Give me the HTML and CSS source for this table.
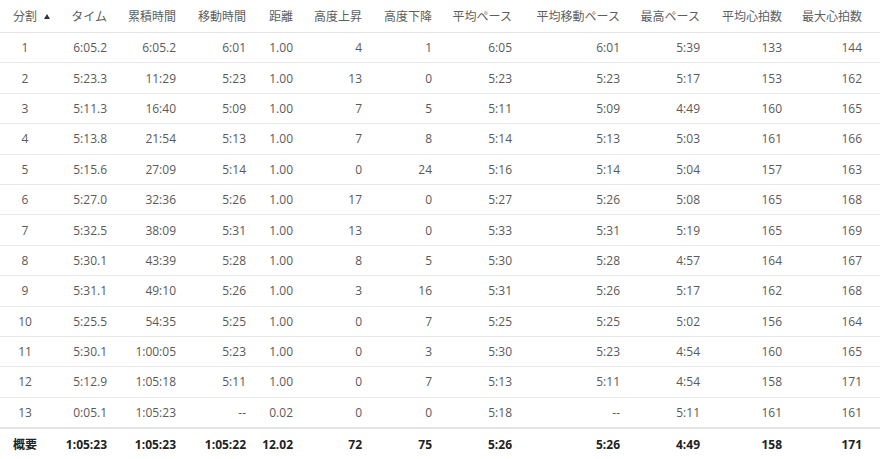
FILE: index.html
```html
<!DOCTYPE html>
<html lang="ja">
<head>
<meta charset="utf-8">
<link rel="stylesheet" href="styles.css">
</head>
<body>
<table class="laps">
<colgroup>
<col class="c1"><col class="c2"><col class="c3"><col class="c4"><col class="c5"><col class="c6"><col class="c7"><col class="c8"><col class="c9"><col class="c10"><col class="c11"><col class="c12">
</colgroup>
<thead>
<tr>
<th class="split"><span class="sort">分割</span></th><th>タイム</th><th>累積時間</th><th>移動時間</th><th>距離</th><th>高度上昇</th><th>高度下降</th><th>平均ペース</th><th>平均移動ペース</th><th>最高ペース</th><th>平均心拍数</th><th>最大心拍数</th>
</tr>
</thead>
<tbody>
<tr><td>1</td><td>6:05.2</td><td>6:05.2</td><td>6:01</td><td>1.00</td><td>4</td><td>1</td><td>6:05</td><td>6:01</td><td>5:39</td><td>133</td><td>144</td></tr>
<tr><td>2</td><td>5:23.3</td><td>11:29</td><td>5:23</td><td>1.00</td><td>13</td><td>0</td><td>5:23</td><td>5:23</td><td>5:17</td><td>153</td><td>162</td></tr>
<tr><td>3</td><td>5:11.3</td><td>16:40</td><td>5:09</td><td>1.00</td><td>7</td><td>5</td><td>5:11</td><td>5:09</td><td>4:49</td><td>160</td><td>165</td></tr>
<tr><td>4</td><td>5:13.8</td><td>21:54</td><td>5:13</td><td>1.00</td><td>7</td><td>8</td><td>5:14</td><td>5:13</td><td>5:03</td><td>161</td><td>166</td></tr>
<tr><td>5</td><td>5:15.6</td><td>27:09</td><td>5:14</td><td>1.00</td><td>0</td><td>24</td><td>5:16</td><td>5:14</td><td>5:04</td><td>157</td><td>163</td></tr>
<tr><td>6</td><td>5:27.0</td><td>32:36</td><td>5:26</td><td>1.00</td><td>17</td><td>0</td><td>5:27</td><td>5:26</td><td>5:08</td><td>165</td><td>168</td></tr>
<tr><td>7</td><td>5:32.5</td><td>38:09</td><td>5:31</td><td>1.00</td><td>13</td><td>0</td><td>5:33</td><td>5:31</td><td>5:19</td><td>165</td><td>169</td></tr>
<tr><td>8</td><td>5:30.1</td><td>43:39</td><td>5:28</td><td>1.00</td><td>8</td><td>5</td><td>5:30</td><td>5:28</td><td>4:57</td><td>164</td><td>167</td></tr>
<tr><td>9</td><td>5:31.1</td><td>49:10</td><td>5:26</td><td>1.00</td><td>3</td><td>16</td><td>5:31</td><td>5:26</td><td>5:17</td><td>162</td><td>168</td></tr>
<tr><td>10</td><td>5:25.5</td><td>54:35</td><td>5:25</td><td>1.00</td><td>0</td><td>7</td><td>5:25</td><td>5:25</td><td>5:02</td><td>156</td><td>164</td></tr>
<tr><td>11</td><td>5:30.1</td><td>1:00:05</td><td>5:23</td><td>1.00</td><td>0</td><td>3</td><td>5:30</td><td>5:23</td><td>4:54</td><td>160</td><td>165</td></tr>
<tr><td>12</td><td>5:12.9</td><td>1:05:18</td><td>5:11</td><td>1.00</td><td>0</td><td>7</td><td>5:13</td><td>5:11</td><td>4:54</td><td>158</td><td>171</td></tr>
<tr><td>13</td><td>0:05.1</td><td>1:05:23</td><td>--</td><td>0.02</td><td>0</td><td>0</td><td>5:18</td><td>--</td><td>5:11</td><td>161</td><td>161</td></tr>
</tbody>
<tfoot>
<tr><td>概要</td><td>1:05:23</td><td>1:05:23</td><td>1:05:22</td><td>12.02</td><td>72</td><td>75</td><td>5:26</td><td>5:26</td><td>4:49</td><td>158</td><td>171</td></tr>
</tfoot>
</table>
</body>
</html>
```

FILE: styles.css
```css
html, body {
  margin: 0;
  padding: 0;
  background: #ffffff;
}

body {
  font-family: "Open Sans", "Noto Sans CJK JP", sans-serif;
  font-size: 12px;
  color: #5a5a5a;
}

.laps {
  width: 880px;
  border-collapse: collapse;
  table-layout: fixed;
}

.c1 { width: 50px; }
.c2 { width: 69px; }
.c3 { width: 69px; }
.c4 { width: 70px; }
.c5 { width: 47px; }
.c6 { width: 69px; }
.c7 { width: 70px; }
.c8 { width: 80px; }
.c9 { width: 108px; }
.c10 { width: 80px; }
.c11 { width: 82px; }
.c12 { width: 86px; }

.laps th,
.laps td {
  padding: 0 12px 0 0;
  text-align: right;
  white-space: nowrap;
  line-height: 17px;
}

.laps th:last-child,
.laps td:last-child {
  padding-right: 18px;
}

.laps th:first-child,
.laps td:first-child {
  text-align: center;
  padding: 0;
}

.laps th {
  font-weight: normal;
  color: #5e5e5e;
  height: 32px;
  border-bottom: 1px solid #e4e4e4;
}

.laps tbody td {
  height: 29.4px;
  border-bottom: 1px solid #e8e8e8;
}

.laps tfoot td {
  height: 30px;
  font-weight: bold;
  color: #222222;
  border-top: 2px solid #e4e4e4;
}

.sort {
  position: relative;
}

.sort::after {
  content: "";
  position: absolute;
  left: 31px;
  top: 6px;
  width: 0;
  height: 0;
  border-left: 3px solid transparent;
  border-right: 3px solid transparent;
  border-bottom: 5px solid #333333;
}
```
